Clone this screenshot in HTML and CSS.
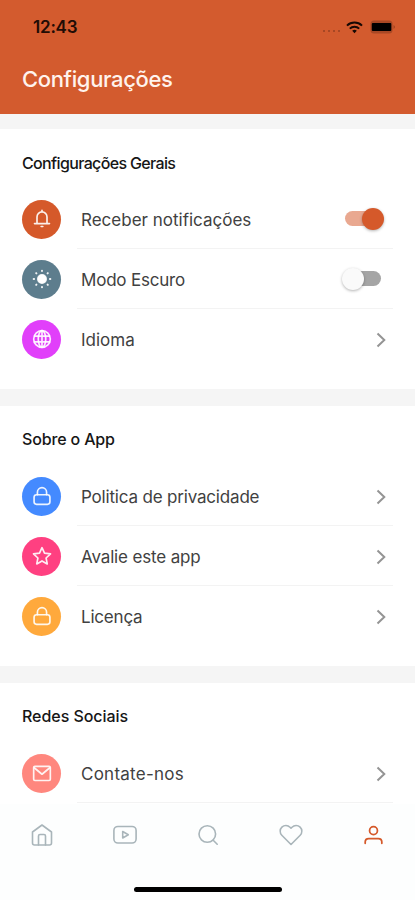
FILE: index.html
```html
<!DOCTYPE html>
<html lang="pt-BR">
<head>
    <meta charset="UTF-8">
    <meta name="viewport" content="width=device-width, initial-scale=1.0">
    <title>Configurações</title>
    <link rel="stylesheet" href="styles.css">
</head>
<body>
    <header class="header">
        <div class="status-bar">
            <span class="time">12:43</span>
            <div class="status-icons">
                <span class="dots"><i></i><i></i><i></i><i></i></span>
                <svg class="wifi" viewBox="0 0 17 13" width="17" height="13" fill="none" stroke="#160804" stroke-width="2">
                    <path d="M1 4.6a10.8 10.8 0 0 1 15 0M3.8 7.6a6.8 6.8 0 0 1 9.4 0"/>
                    <path d="M6.2 9.8a3.4 3.4 0 0 1 4.6 0L8.5 12.2z" fill="#160804" stroke="none"/>
                </svg>
                <svg class="battery" viewBox="0 0 26 14" width="26" height="14">
                    <rect x=".5" y=".5" width="22" height="13" rx="3.5" fill="#a84825"/>
                    <rect x="1.8" y="3" width="19.5" height="8" rx="1" fill="#000"/>
                    <path d="M23.7 5v4q2-2 0-4z" fill="#8a371b"/>
                </svg>
            </div>
        </div>
        <h1>Configurações</h1>
    </header>

    <main class="content">
        <section class="group">
            <h2 class="t-general">Configurações Gerais</h2>
            <div class="row">
                <span class="icon orange">
                    <svg viewBox="0 0 24 24"><path d="M3 17.5h18M6 17V9.500a6 6 0 0 1 12 0V17M12 1.500v2M11 21h2"/></svg>
                </span>
                <div class="row-body">
                    <span class="label l-notify">Receber notificações</span>
                    <span class="switch on"></span>
                </div>
            </div>
            <div class="row">
                <span class="icon slate">
                    <svg viewBox="0 0 24 24"><circle cx="12" cy="12" r="5" fill="#fff"/><path class="rays" d="M12 2v.5M12 21.5v.5M2 12h.5M21.5 12h.5M5 5l.3.3M18.7 18.7l.3.3M5 19l.3-.3M18.7 5.3l.3-.3"/></svg>
                </span>
                <div class="row-body">
                    <span class="label l-dark">Modo Escuro</span>
                    <span class="switch"></span>
                </div>
            </div>
            <div class="row">
                <span class="icon purple">
                    <svg viewBox="0 0 24 24"><circle cx="12" cy="12" r="10"/><ellipse cx="12" cy="12" rx="4.5" ry="10"/><path d="M12 2v20M3 8.5h18M3 15.5h18"/></svg>
                </span>
                <div class="row-body">
                    <span class="label l-lang">Idioma</span>
                    <svg class="chevron" viewBox="0 0 10 16"><path d="M1.5 1.5 8.3 8l-6.8 6.5"/></svg>
                </div>
            </div>
        </section>

        <section class="group">
            <h2 class="t-about">Sobre o App</h2>
            <div class="row">
                <span class="icon blue">
                    <svg viewBox="0 0 24 24"><rect x="2.5" y="10.5" width="19" height="11.5" rx="3"/><path d="M6.5 10.5V7.5a5.5 5.5 0 0 1 11 0v3"/></svg>
                </span>
                <div class="row-body">
                    <span class="label l-privacy">Politica de privacidade</span>
                    <svg class="chevron" viewBox="0 0 10 16"><path d="M1.5 1.5 8.3 8l-6.8 6.5"/></svg>
                </div>
            </div>
            <div class="row">
                <span class="icon pink">
                    <svg viewBox="0 0 24 24"><path d="m12 2 3 6.6 7.2.8-5.3 5 1.4 7.1-6.3-3.6-6.3 3.6 1.4-7.1-5.3-5 7.2-.8z"/></svg>
                </span>
                <div class="row-body">
                    <span class="label l-rate">Avalie este app</span>
                    <svg class="chevron" viewBox="0 0 10 16"><path d="M1.5 1.5 8.3 8l-6.8 6.5"/></svg>
                </div>
            </div>
            <div class="row">
                <span class="icon amber">
                    <svg viewBox="0 0 24 24"><rect x="2.5" y="10.5" width="19" height="11.5" rx="3"/><path d="M6.5 10.5V7.5a5.5 5.5 0 0 1 11 0v3"/></svg>
                </span>
                <div class="row-body">
                    <span class="label l-license">Licença</span>
                    <svg class="chevron" viewBox="0 0 10 16"><path d="M1.5 1.5 8.3 8l-6.8 6.5"/></svg>
                </div>
            </div>
        </section>

        <section class="group">
            <h2 class="t-social">Redes Sociais</h2>
            <div class="row">
                <span class="icon salmon">
                    <svg viewBox="0 0 24 24"><rect x="2" y="4" width="20" height="17" rx="1.5"/><path d="m3 6 9 7.5L21 6"/></svg>
                </span>
                <div class="row-body">
                    <span class="label l-contact">Contate-nos</span>
                    <svg class="chevron" viewBox="0 0 10 16"><path d="M1.5 1.5 8.3 8l-6.8 6.5"/></svg>
                </div>
            </div>
        </section>
    </main>

    <footer class="bottom">
        <nav class="tabs">
            <a><svg viewBox="0 0 24 24"><path d="M2.5 9 12 2l9.5 7v11a2 2 0 0 1-2 2h-15a2 2 0 0 1-2-2z"/><path d="M8.5 22V13q0-1.5 1.5-1.5h4q1.5 0 1.5 1.5v9"/></svg></a>
            <a><svg viewBox="0 0 24 24"><rect x=".9" y="3.5" width="22.2" height="16.5" rx="4"/><path d="M9.7 8.5v6.5l5.6-3.2z"/></svg></a>
            <a><svg viewBox="0 0 24 24"><circle cx="11.3" cy="11" r="8.3"/><path d="m17.2 17.2 4 4"/></svg></a>
            <a><svg viewBox="0 0 24 24"><path d="M12 21.5 2.8 12.2A5.6 5.6 0 0 1 11 4.2l1 1 1-1a5.6 5.6 0 0 1 8.200 8z"/></svg></a>
            <a class="active"><svg viewBox="0 0 24 24"><circle cx="12" cy="7" r="4.5"/><path d="M2.5 21.5v-1.500q0-4 4-4h11q4 0 4 4v1.500"/></svg></a>
        </nav>
        <div class="home-bar"></div>
    </footer>
</body>
</html>
```
FILE: styles.css
```css
* {
    box-sizing: border-box;
}

body {
    margin: 0;
    height: 900px;
    display: flex;
    flex-direction: column;
    overflow: hidden;
    background: #fff;
    font-family: Inter, "Noto Sans", sans-serif;
}

.header {
    height: 114px;
    flex: none;
    background: #d35b2e;
    padding: 14px 19px 0 22px;
}

.status-bar {
    display: flex;
    justify-content: space-between;
    align-items: center;
    height: 26px;
    padding-left: 11px;
}

.time {
    font-size: 17px;
    font-weight: 600;
    letter-spacing: -0.2px;
    color: #210c05;
}

.status-icons {
    display: flex;
    align-items: center;
}

.dots {
    display: flex;
    gap: 3px;
    margin: 8px 6px 0 0;
}

.dots i {
    width: 2px;
    height: 2px;
    background: #a74724;
}

.wifi {
    margin-right: 7px;
}

h1 {
    margin: 23px 0 0;
    font-size: 22px;
    line-height: 32px;
    font-weight: 500;
    letter-spacing: -0.35px;
    color: #fff3ed;
}

.content {
    flex: 1;
    min-height: 0;
    overflow: hidden;
    display: flex;
    flex-direction: column;
    gap: 17px;
    padding-top: 15px;
    background: #f5f5f5;
}

.group {
    flex: none;
    height: 260px;
    padding: 0 22px;
    background: #fff;
}

h2 {
    margin: 0;
    padding-top: 22px;
    height: 60px;
    font-size: 16px;
    line-height: 24px;
    font-weight: 500;
    color: #161616;
}

/* tracking of the section titles */
.t-general { letter-spacing: -0.65px; }
.t-about { letter-spacing: -0.15px; }
.t-social { letter-spacing: -0.05px; }

.t-about,
.t-social {
    padding-top: 21px;
}

.row {
    display: flex;
    align-items: center;
    height: 60px;
}

.icon {
    width: 39px;
    height: 39px;
    border-radius: 50%;
    display: flex;
    align-items: center;
    justify-content: center;
}

.icon svg {
    width: 20px;
    height: 20px;
    fill: none;
    stroke: #fff;
    stroke-opacity: .9;
    stroke-width: 2;
    stroke-linecap: round;
    stroke-linejoin: round;
}

.icon .rays {
    stroke-width: 2.4;
}

.orange { background: #d5592a; }
.slate { background: #5d7d8d; }
.purple { background: #e13ffa; }
.blue { background: #448aff; }
.pink { background: #ff4081; }
.amber { background: #ffa93c; }
.salmon { background: #ff877e; }

.row-body {
    flex: 1;
    height: 60px;
    margin-left: 16px;
    padding: 2px 5px 0 4px;
    display: flex;
    align-items: center;
    justify-content: space-between;
    border-bottom: 1px solid #f3f3f3;
}

.row:nth-child(4) .row-body {
    border-color: transparent;
}

.label {
    font-size: 17px;
    line-height: 24px;
    color: #414141;
    white-space: nowrap;
}

/* tracking of the row labels */
.l-dark { letter-spacing: -0.2px; }
.l-privacy { letter-spacing: -0.18px; }
.l-rate { letter-spacing: -0.15px; }
.l-license { letter-spacing: -0.2px; }
.l-contact { letter-spacing: 0.25px; }

.chevron {
    width: 10px;
    height: 16px;
    margin-right: 2px;
    fill: none;
    stroke: #949494;
    stroke-width: 2;
}

.switch {
    position: relative;
    width: 36px;
    height: 15px;
    margin: 0 7px 2px 0;
    border-radius: 8px;
    background: #a5a5a5;
}

.switch::after {
    content: '';
    position: absolute;
    top: -3px;
    left: -3px;
    width: 22px;
    height: 22px;
    border-radius: 50%;
    background: #fafafa;
    box-shadow: 0 1px 3px rgba(0, 0, 0, .3);
}

.switch.on {
    background: #e9a890;
}

.switch.on::after {
    left: 17px;
    background: #d5592a;
}

.bottom {
    flex: none;
    height: 96px;
    background: #fdfefe;
}

.tabs {
    display: flex;
    height: 62px;
    align-items: center;
}

.tabs a {
    flex: 1;
    display: flex;
    justify-content: center;
}

.tabs svg {
    width: 24px;
    height: 24px;
    fill: none;
    stroke: #a9b5ba;
    stroke-width: 1.6;
    stroke-linecap: round;
    stroke-linejoin: round;
}

.tabs .active svg {
    width: 21px;
    stroke: #d5592a;
    stroke-width: 2;
}

.home-bar {
    width: 148px;
    height: 5px;
    margin: 21px auto 0;
    border-radius: 3px;
    background: #000;
}
```
